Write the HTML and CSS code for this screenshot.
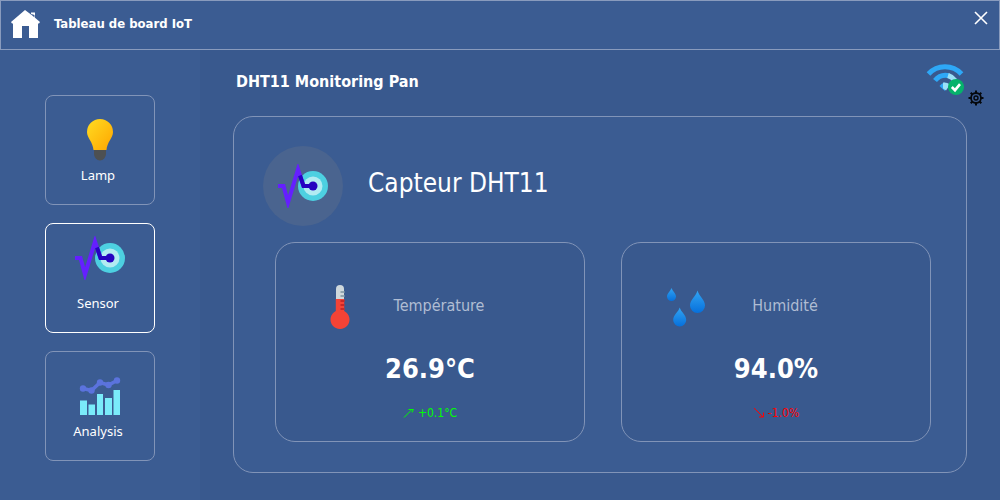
FILE: index.html
```html
<!DOCTYPE html>
<html lang="fr">
<head>
<meta charset="utf-8">
<title>Tableau de board IoT</title>
<link rel="stylesheet" href="styles.css">
</head>
<body>
<svg class="defs" aria-hidden="true">
  <defs>
    <symbol id="pulse" viewBox="0 0 50 44">
      <circle cx="35" cy="22" r="15" fill="#4dd0e1"/>
      <circle cx="35" cy="22" r="9.5" fill="#b2ebf2"/>
      <path d="M0 22H5.500L10 38.500L20 5.500L25.500 22H31" fill="none" stroke="#651fff" stroke-width="4"/>
      <path d="M22 11.500L25.500 22H35" fill="none" stroke="#2602c0" stroke-width="4"/>
      <circle cx="35" cy="22" r="4.500" fill="#2602c0"/>
    </symbol>
    <linearGradient id="bulb" x1="0" y1="0" x2="1" y2="1">
      <stop offset="0" stop-color="#ffdc22"/>
      <stop offset="1" stop-color="#ffa500"/>
    </linearGradient>
    <linearGradient id="water" x1="0" y1="0" x2="0" y2="1">
      <stop offset="0" stop-color="#32a4f2"/>
      <stop offset="1" stop-color="#0670dc"/>
    </linearGradient>
  </defs>
</svg>
<header class="topbar">
  <svg class="home" viewBox="0 0 30 30" aria-hidden="true">
    <path fill="#fff" d="M15 1L1 13l1 1.500h1V29h9V17h7v12h9V14.500h1l1-1.500-5-4.300V3.500h-4v2z"/>
    <path fill="#3b5c92" d="M20 4.500l4.500 4V6z"/>
  </svg>
  <h1 class="app-title">Tableau de board IoT</h1>
  <button class="close" type="button" aria-label="Fermer">
    <svg viewBox="0 0 14 14" width="14" height="14"><path d="M1 1l12 12M13 1L1 13" stroke="#fff" stroke-width="1.600" fill="none"/></svg>
  </button>
</header>
<div class="body">
  <nav class="sidebar">
    <button class="tile" type="button">
      <svg class="tile-icon" viewBox="0 0 50 44" aria-hidden="true">
        <path fill="url(#bulb)" d="M25 1a13 13 0 0 1 13 13c0 6-6 10-6.500 18h-13C18 24 12 20 12 14A13 13 0 0 1 25 1z"/>
        <path fill="#4d5052" d="M19 32h12v4a6 6.500 0 0 1-12 0z"/>
      </svg>
      <span>Lamp</span>
    </button>
    <button class="tile active" type="button">
      <svg class="tile-icon raised" aria-hidden="true"><use href="#pulse"/></svg>
      <span>Sensor</span>
    </button>
    <button class="tile" type="button">
      <svg class="tile-icon" viewBox="0 0 50 44" aria-hidden="true">
        <path fill="#7aebfa" d="M5 26.500h7V41H5zM13.500 30.500h6.500V41h-6.500zM22 20h6v21h-6zM30 24h7v17h-7zM38.500 16h6.500v25h-6.500z"/>
        <path d="M8 14.500l8.500 2 8.500-8 8.500 2.500 8.500-4.500" fill="none" stroke="#5b73dd" stroke-width="3.500"/>
        <g fill="#5b73dd"><circle cx="8" cy="14.500" r="3.200"/><circle cx="16.500" cy="16.500" r="3.200"/><circle cx="25" cy="8.500" r="3.200"/><circle cx="33.500" cy="11" r="3.200"/><circle cx="42" cy="6.500" r="3.200"/></g>
      </svg>
      <span>Analysis</span>
    </button>
  </nav>
  <main class="content">
    <div class="content-head">
      <h2 class="page-title">DHT11 Monitoring Pan</h2>
      <div class="status">
        <svg class="wifi" viewBox="0 0 40 36" role="img" aria-label="Wi-Fi connecté">
          <path d="M2.500 12a22.500 22.500 0 0 1 33 0" fill="none" stroke="#2ea8f7" stroke-width="5"/>
          <path d="M9 18.500a14 14 0 0 1 14-4.800" fill="none" stroke="#2ea8f7" stroke-width="5"/>
          <path d="M22 13.500a14 14 0 0 1 7 5" fill="none" stroke="#9be0f7" stroke-width="5"/>
          <path d="M13.500 24q2-3 5.500-3.500v8.500z" fill="#2ea8f7"/>
          <path d="M17 20.500q4-.5 7 2l-4 6-3-2z" fill="#9be0f7"/>
          <circle cx="30" cy="25" r="8" fill="#06b26b"/>
          <path d="M25.800 25l3.200 3.200 5-6" fill="none" stroke="#fff" stroke-width="2.600"/>
        </svg>
        <button class="settings" type="button" aria-label="Paramètres">
          <svg viewBox="0 0 16 16" width="16" height="16" fill="none" stroke="#05080c">
            <circle cx="8" cy="8" r="5" stroke-width="1.800"/>
            <circle cx="8" cy="8" r="2" stroke-width="1.400"/>
            <path stroke-width="2" d="M8 .500V3M8 13v2.500M.500 8H3M13 8h2.500M2.700 2.700l1.800 1.800M11.500 11.500l1.800 1.800M2.700 13.300l1.800-1.800M11.500 4.500l1.800-1.800"/>
          </svg>
        </button>
      </div>
    </div>
    <section class="panel">
      <div class="panel-head">
        <span class="badge"><svg class="badge-icon" aria-hidden="true"><use href="#pulse"/></svg></span>
        <h3 class="panel-title">Capteur DHT11</h3>
      </div>
      <div class="cards">
        <article class="card">
          <div class="card-head">
            <svg class="metric-icon" viewBox="0 0 50 50" aria-hidden="true">
              <path fill="#cfd8dc" d="M21 18V8a4 4 0 0 1 8 0V18z"/>
              <path fill="#f44336" d="M20.800 18h8.400V30a9.500 9.500 0 1 1-8.400 0z"/>
              <path fill="#90a4ae" d="M25.500 10h4v2h-4zM25.500 14h4v2h-4z"/>
              <path fill="#c62828" d="M25.500 19h4v2h-4zM25.500 23h4v2h-4zM25.500 27h4v2h-4z"/>
            </svg>
            <span class="metric-name">Température</span>
          </div>
          <strong class="value">26.9°C</strong>
          <span class="trend up"><svg viewBox="0 0 12 12" width="12" height="12" aria-hidden="true"><path d="M1 10.500L9.500 2M5.500 2.500H10.500L9 5.500" fill="none" stroke="currentColor"/></svg>+0.1°C</span>
        </article>
        <article class="card">
          <div class="card-head">
            <svg class="metric-icon" viewBox="0 0 50 50" aria-hidden="true" fill="url(#water)">
              <path d="M10.500 7C12 10.500 15 12.500 15 15.500a4.500 4.500 0 0 1-9 0C6 12.500 9 10.500 10.500 7z"/>
              <path d="M36.500 9.500C38 15 44 19 44 24.500a7.500 7.500 0 0 1-15 0C29 19 35 15 36.500 9.500z"/>
              <path d="M18.700 26.500C20 31 25.200 34 25.200 39a6.500 6.500 0 0 1-13 0c0-5 5.200-8 6.500-12.500z"/>
            </svg>
            <span class="metric-name">Humidité</span>
          </div>
          <strong class="value">94.0%</strong>
          <span class="trend down"><svg viewBox="0 0 12 12" width="12" height="12" aria-hidden="true"><path d="M1 1l9 9M6 10h4.500V5.500" fill="none" stroke="currentColor"/></svg>-1.0%</span>
        </article>
      </div>
    </section>
  </main>
</div>
</body>
</html>
```
FILE: styles.css
```css
* { box-sizing: border-box; }
html { height: 100%; }
body {
  min-height: 100%;
  margin: 0;
  display: flex;
  flex-direction: column;
  background: #3b5c92;
  color: #fff;
  font-family: Tahoma, "DejaVu Sans Condensed", "Noto Sans", sans-serif;
}
h1, h2, h3 { margin: 0; }
button {
  font: inherit;
  color: inherit;
  background: none;
  padding: 0;
  border: 0;
  cursor: pointer;
}
svg { display: block; flex: none; }
.defs { position: absolute; width: 0; height: 0; }
.topbar {
  display: flex;
  align-items: center;
  height: 50px;
  padding: 0 11px 2px 9px;
  border: 1px solid #899bbd;
}
.home { width: 30px; height: 30px; }
.app-title { margin-left: 14px; font-size: 13px; line-height: 18px; }
.close { margin-left: auto; margin-bottom: 12px; }
.body { flex: 1; display: flex; }
.sidebar {
  width: 200px;
  padding: 45px;
  display: flex;
  flex-direction: column;
  gap: 18px;
}
.tile {
  height: 110px;
  display: flex;
  flex-direction: column;
  align-items: center;
  justify-content: flex-end;
  gap: 3px;
  padding: 0 4px 19px 0;
  border: 1px solid #8194b8;
  border-radius: 8px;
  font-family: Tahoma, "Noto Sans", sans-serif;
  font-size: 13px;
  line-height: 20px;
}
.tile.active { border-color: #fff; }
.tile-icon { width: 50px; height: 44px; margin-left: 4px; }
.raised { margin-bottom: 10px; }
.content {
  flex: 1;
  padding: 0 33px 27px;
  background: #39598e;
}
.content-head {
  display: flex;
  justify-content: space-between;
  height: 66px;
  padding-left: 3px;
  margin-right: -18px;
}
.page-title { padding-top: 21px; font-size: 16px; line-height: 22px; }
.status { display: flex; align-items: flex-start; padding-top: 12px; }
.wifi { width: 40px; height: 36px; }
.settings { margin: 28px 1px 0 2px; }
.panel {
  padding: 29px 35px 30px 29px;
  border: 1px solid #8194b8;
  border-radius: 20px;
  background: #3b5c92;
}
.panel-head { display: flex; align-items: center; gap: 25px; }
.badge {
  display: grid;
  place-items: center;
  width: 80px;
  height: 80px;
  border-radius: 50%;
  background: #4a648f;
}
.badge-icon { width: 50px; height: 44px; }
.panel-title { padding-bottom: 6px; font-size: 26px; line-height: 36px; font-weight: 400; }
.cards { display: grid; grid-template-columns: 1fr 1fr; gap: 36px; margin: 16px 0 0 12px; }
.card {
  display: flex;
  flex-direction: column;
  align-items: center;
  padding: 38px 0 19px;
  border: 1px solid #8194b8;
  border-radius: 20px;
  background: #39598e;
}
.card-head {
  align-self: flex-start;
  display: grid;
  grid-template-columns: 50px 148px;
  align-items: center;
  padding-left: 39px;
}
.metric-icon { width: 50px; height: 50px; }
.metric-name { text-align: center; font-size: 16px; line-height: 22px; color: #b0bdd3; }
.value { margin-top: 20px; font-size: 27px; line-height: 36px; }
.trend { display: flex; align-items: center; gap: 3px; margin-top: 17px; font-size: 12px; line-height: 18px; }
.up { color: #0f0; }
.down { color: #f00; }
```
